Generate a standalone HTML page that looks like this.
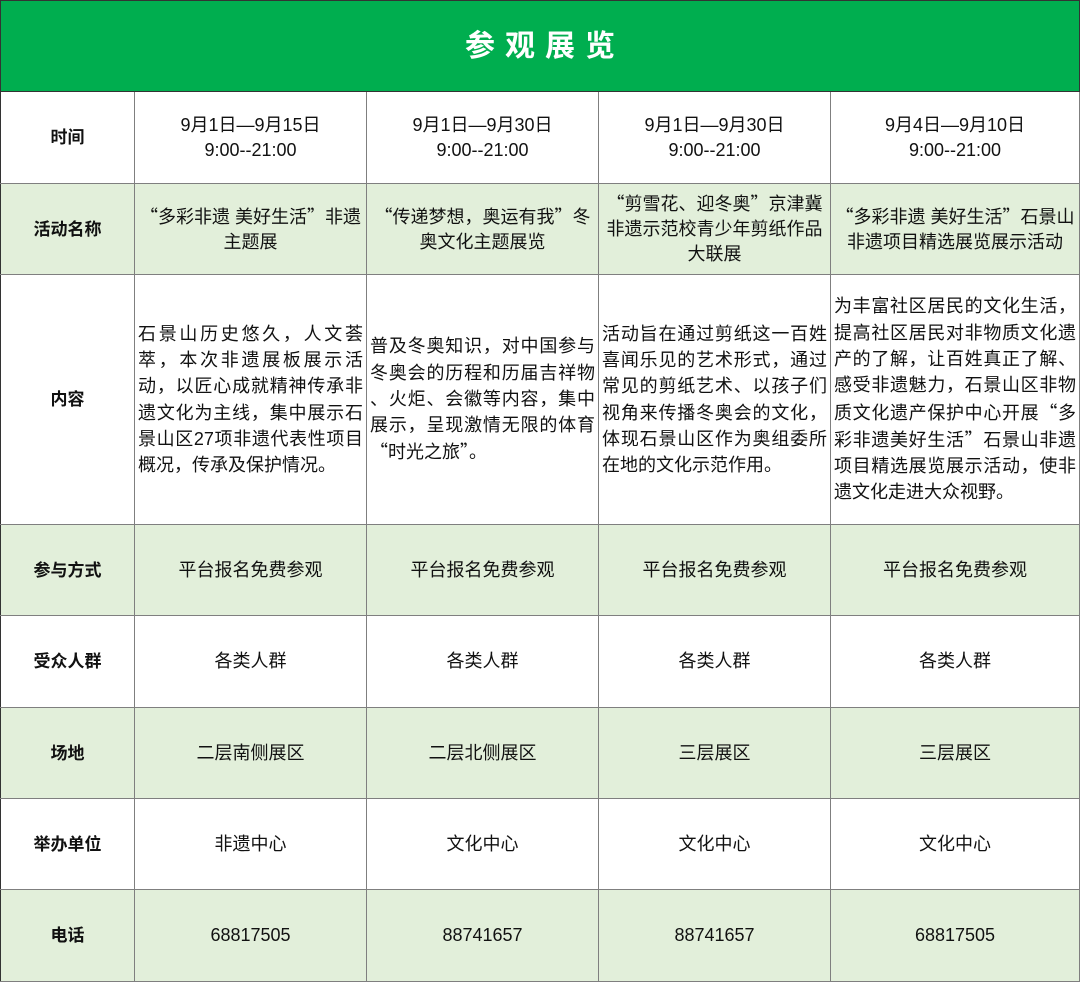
<!DOCTYPE html>
<html><head><meta charset="utf-8"><style>
body{margin:0;background:#fff;width:1080px;height:983px;overflow:hidden;font-family:"Liberation Sans","Noto Sans CJK SC",sans-serif;color:#111}
table{border-collapse:collapse;table-layout:fixed;position:absolute;left:0;top:0;width:1079px}
td{border:1px solid #7f7f7f;text-align:center;vertical-align:middle;font-size:18px;letter-spacing:0;line-height:25px;padding:0 2px}
td.l{font-weight:bold;font-size:17px;border-left:1px solid #333}
.hd td{background:#00ae4f;color:#fff;font-size:30px;font-weight:bold;letter-spacing:10px;padding-left:12px;border:1px solid #333}
.g td{background:#e2efda}
td.c{text-align:left;font-size:18px;line-height:26.3px;padding:0 3px 0 3px;white-space:nowrap;overflow:hidden}
td.c div{text-align:justify;text-align-last:justify}
td.c div.e{text-align-last:left}
.q{font-family:"Noto Sans CJK SC",sans-serif}
</style></head><body>
<table>
<colgroup><col style="width:134px"><col style="width:232px"><col style="width:232px"><col style="width:232px"><col style="width:249px"></colgroup>
<tr class="hd" style="height:91px"><td colspan="5">参观展览</td></tr>
<tr style="height:92px"><td class="l">时间</td><td>9月1日—9月15日<br>9:00--21:00</td><td>9月1日—9月30日<br>9:00--21:00</td><td>9月1日—9月30日<br>9:00--21:00</td><td>9月4日—9月10日<br>9:00--21:00</td></tr>
<tr class="g" style="height:91px"><td class="l">活动名称</td><td><span class="q">“</span>多彩非遗 美好生活<span class="q">”</span>非遗<br>主题展</td><td><span class="q">“</span>传递梦想，奥运有我<span class="q">”</span>冬<br>奥文化主题展览</td><td><span class="q">“</span>剪雪花、迎冬奥<span class="q">”</span>京津冀<br>非遗示范校青少年剪纸作品<br>大联展</td><td><span class="q">“</span>多彩非遗 美好生活<span class="q">”</span>石景山<br>非遗项目精选展览展示活动</td></tr>
<tr style="height:250px"><td class="l">内容</td>
<td class="c"><div>石景山历史悠久，人文荟</div><div>萃，本次非遗展板展示活</div><div>动，以匠心成就精神传承非</div><div>遗文化为主线，集中展示石</div><div>景山区27项非遗代表性项目</div><div class="e">概况，传承及保护情况。</div></td>
<td class="c"><div>普及冬奥知识，对中国参与</div><div>冬奥会的历程和历届吉祥物</div><div>、火炬、会徽等内容，集中</div><div>展示，呈现激情无限的体育</div><div class="e"><span class="q">“</span>时光之旅<span class="q">”</span>。</div></td>
<td class="c"><div>活动旨在通过剪纸这一百姓</div><div>喜闻乐见的艺术形式，通过</div><div>常见的剪纸艺术、以孩子们</div><div>视角来传播冬奥会的文化，</div><div>体现石景山区作为奥组委所</div><div class="e">在地的文化示范作用。</div></td>
<td class="c"><div>为丰富社区居民的文化生活，</div><div>提高社区居民对非物质文化遗</div><div>产的了解，让百姓真正了解、</div><div>感受非遗魅力，石景山区非物</div><div>质文化遗产保护中心开展<span class="q">“</span>多</div><div>彩非遗美好生活<span class="q">”</span>石景山非遗</div><div>项目精选展览展示活动，使非</div><div class="e">遗文化走进大众视野。</div></td></tr>
<tr class="g" style="height:91px"><td class="l">参与方式</td><td>平台报名免费参观</td><td>平台报名免费参观</td><td>平台报名免费参观</td><td>平台报名免费参观</td></tr>
<tr style="height:92px"><td class="l">受众人群</td><td>各类人群</td><td>各类人群</td><td>各类人群</td><td>各类人群</td></tr>
<tr class="g" style="height:91px"><td class="l">场地</td><td>二层南侧展区</td><td>二层北侧展区</td><td>三层展区</td><td>三层展区</td></tr>
<tr style="height:91px"><td class="l">举办单位</td><td>非遗中心</td><td>文化中心</td><td>文化中心</td><td>文化中心</td></tr>
<tr class="g" style="height:92px"><td class="l">电话</td><td>68817505</td><td>88741657</td><td>88741657</td><td>68817505</td></tr>
</table>
</body></html>
